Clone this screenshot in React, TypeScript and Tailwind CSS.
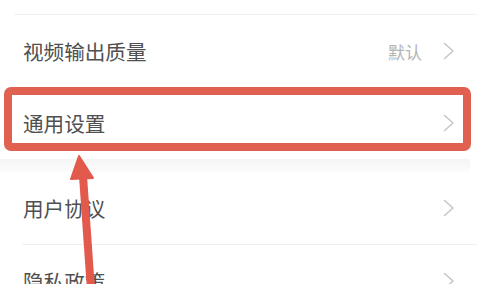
const font = { fontFamily: '"Noto Sans CJK SC", "Noto Sans", sans-serif' };

const Chevron = () => (
    <svg width="12" height="18" viewBox="0 0 12 18" className="shrink-0">
        <path d="M1.5 1.5 L10 9 L1.5 16.5" fill="none" stroke="#c6c6c6" strokeWidth="1.6" strokeLinecap="round" strokeLinejoin="round" />
    </svg>
);

interface RowProps {
    title: string;
    value?: string;
    divider?: boolean;
}

const Row = ({ title, value, divider }: RowProps) => (
    <div className="flex flex-col">
        <div className="flex h-[72px] items-center pl-[23px] pr-[45px]">
            <span className="flex-1 text-[20.6px] leading-none text-[#505050]">{title}</span>
            {value && <span className="mr-[21px] text-[17px] leading-none text-[#b4b4b4]">{value}</span>}
            <Chevron />
        </div>
        {divider && <div className="ml-[22px] mr-[23px] h-px bg-[#efefef]" />}
    </div>
);

export default function App() {
    return (
        <div className="relative h-[284px] w-[500px] overflow-hidden bg-white" style={font}>
            <div className="h-[14px]" />
            <div className="ml-[14px] mr-[23px] h-px bg-[#f1f1f1]" />
            <Row title="视频输出质量" value="默认" />
            <Row title="通用设置" />
            <div className="mr-[30px] h-[13px] bg-gradient-to-b from-[#f5f5f5] to-[#fcfcfc]" />
            <Row title="用户协议" divider />
            <Row title="隐私政策" />

            {/* annotation overlay */}
            <svg className="pointer-events-none absolute left-0 top-0" width="500" height="284" viewBox="0 0 500 284">
                <rect x="8" y="91" width="459" height="56" rx="3" fill="none" stroke="#e0614f" strokeWidth="8" />
                <path d="M83 176 L91 290" stroke="#e25a4b" strokeWidth="8" strokeLinecap="butt" />
                <path d="M79 156 L93 178 L71 179 Z" fill="#e25a4b" stroke="#e25a4b" strokeWidth="2" strokeLinejoin="round" />
            </svg>
        </div>
    );
}
